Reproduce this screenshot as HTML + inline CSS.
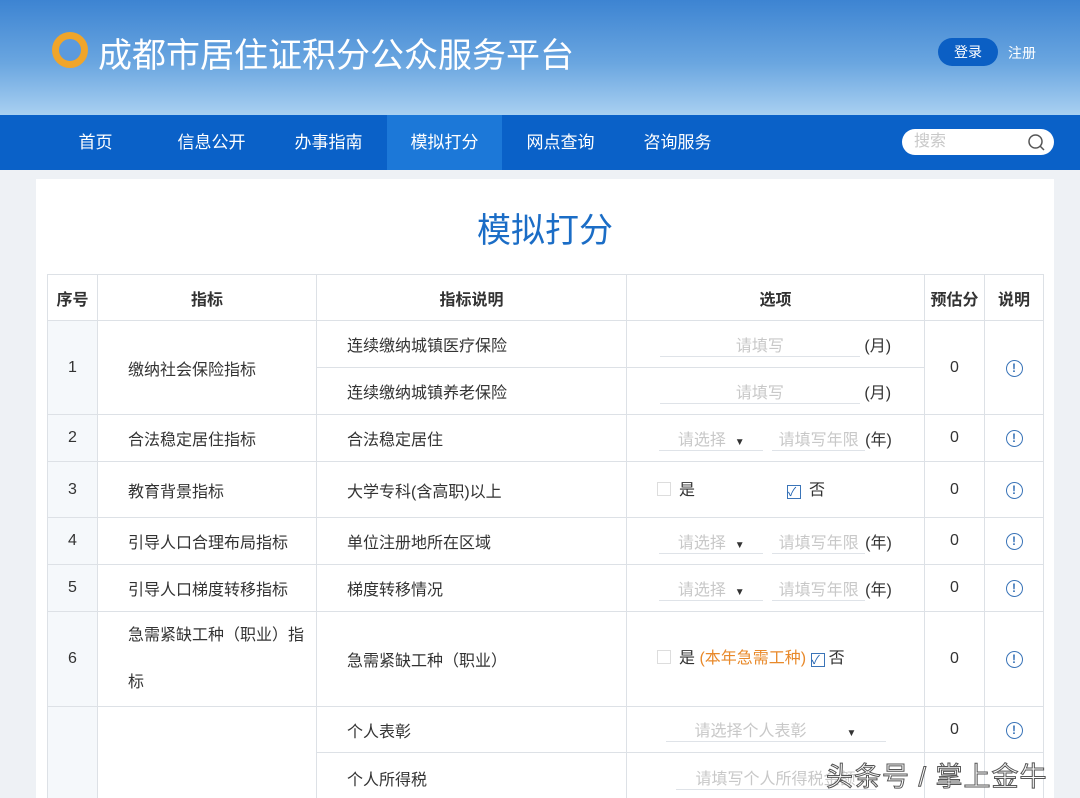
<!DOCTYPE html>
<html><head><meta charset="utf-8"><style>
*{margin:0;padding:0;box-sizing:border-box}
body{width:1080px;height:798px;overflow:hidden;background:#eef1f5;font-family:"Liberation Sans","Noto Sans CJK SC",sans-serif;position:relative}
.hd{position:absolute;left:0;top:0;width:1080px;height:115px;background:linear-gradient(180deg,#3d84d2 0%,#6aa6e0 55%,#a9d0f1 100%)}
.logo{position:absolute;left:52px;top:32px;width:36px;height:36px;border-radius:50%;border:7px solid #f0a52a;background:#5b9ade}
.title{position:absolute;left:98px;top:28px;font-size:34px;color:#fff;letter-spacing:0px}
.login{position:absolute;left:938px;top:38px;width:60px;height:28px;border-radius:14px;background:#0b5fc4;color:#fff;font-size:14px;text-align:center;line-height:28px}
.reg{position:absolute;left:1008px;top:43px;color:#fff;font-size:14px}
.nav{position:absolute;left:0;top:115px;width:1080px;height:55px;background:#0a61c8}
.nav span{position:absolute;top:0;height:55px;line-height:55px;color:#fff;font-size:17px;text-align:center;width:115px}
.nav .act{background:#1c78d8}
.search{position:absolute;left:902px;top:14px;width:152px;height:26px;border-radius:13px;background:#fff;color:#c8c8c8;font-size:16px;line-height:26px;padding-left:12px}
.box{position:absolute;left:36px;top:179px;width:1018px;height:619px;background:#fff;overflow:hidden}
h1{position:absolute;left:0;width:1018px;top:24px;text-align:center;font-size:34px;font-weight:normal;color:#1b6dc6}
table{position:absolute;left:11px;top:95px;border-collapse:collapse;font-size:16px;color:#333}
td{border:1px solid #dde1e6;text-align:center;padding:0}
th{border:1px solid #dde1e6;font-size:16px;font-weight:bold;color:#333;height:46px}
td.l{text-align:left;padding-left:30px}
td.n{background:#f5f8fb}
.inp{display:inline-block;border-bottom:1px solid #dfe3e8;color:#c8c8c8;text-align:center}
.ic{display:inline-block;width:17px;height:17px;border:1.5px solid #3a74b8;border-radius:50%;color:#3a74b8;font-size:12px;line-height:14px;font-weight:bold}
.cb{display:inline-block;width:14px;height:14px;border:1px solid #ddd;vertical-align:-1px;margin-right:8px;font-size:12px;line-height:12px;color:#1b5fb0}
.cb.on{border-color:#3a74b8}
.wm{position:absolute;left:826px;top:755px;font-size:27px;color:#fff;-webkit-text-stroke:1px #555;letter-spacing:1px}
</style></head><body>
<div class="hd"><div class="logo"></div><div class="title">成都市居住证积分公众服务平台</div><div class="login">登录</div><div class="reg">注册</div></div>
<div class="nav"><span style="left:38px">首页</span><span style="left:154px">信息公开</span><span style="left:271px">办事指南</span><span class="act" style="left:387px">模拟打分</span><span style="left:503px">网点查询</span><span style="left:620px">咨询服务</span>
<div class="search">搜索<svg style="position:absolute;right:8px;top:4px" width="19" height="19" viewBox="0 0 19 19"><circle cx="8.5" cy="8.5" r="6.5" fill="none" stroke="#555" stroke-width="1.5"/><path d="M13 13l4 4" stroke="#555" stroke-width="1.5"/></svg></div></div>
<div class="box"><h1>模拟打分</h1>
<table>
<tr><th style="width:50px">序号</th><th style="width:219px">指标</th><th style="width:310px">指标说明</th><th style="width:298px">选项</th><th style="width:60px">预估分</th><th style="width:59px">说明</th></tr>
<tr style="height:47px"><td class="n" rowspan="2">1</td><td class="l" rowspan="2">缴纳社会保险指标</td><td class="l">连续缴纳城镇医疗保险</td><td><span class="inp" style="width:200px">请填写</span> (月)</td><td rowspan="2">0</td><td rowspan="2"><span class="ic">!</span></td></tr>
<tr style="height:47px"><td class="l">连续缴纳城镇养老保险</td><td><span class="inp" style="width:200px">请填写</span> (月)</td></tr>
<tr style="height:47px"><td class="n">2</td><td class="l">合法稳定居住指标</td><td class="l">合法稳定居住</td><td><span class="inp" style="width:104px">请选择 &nbsp;<span style="color:#333;font-size:10px">▼</span></span> &nbsp;<span class="inp" style="width:93px">请填写年限</span>(年)</td><td>0</td><td><span class="ic">!</span></td></tr>
<tr style="height:56px"><td class="n">3</td><td class="l">教育背景指标</td><td class="l">大学专科(含高职)以上</td><td style="text-align:left;padding-left:30px;vertical-align:top;padding-top:14px"><span class="cb"></span>是<span style="display:inline-block;width:92px"></span><span class="cb on">✓</span>否</td><td>0</td><td><span class="ic">!</span></td></tr>
<tr style="height:47px"><td class="n">4</td><td class="l">引导人口合理布局指标</td><td class="l">单位注册地所在区域</td><td><span class="inp" style="width:104px">请选择 &nbsp;<span style="color:#333;font-size:10px">▼</span></span> &nbsp;<span class="inp" style="width:93px">请填写年限</span>(年)</td><td>0</td><td><span class="ic">!</span></td></tr>
<tr style="height:47px"><td class="n">5</td><td class="l">引导人口梯度转移指标</td><td class="l">梯度转移情况</td><td><span class="inp" style="width:104px">请选择 &nbsp;<span style="color:#333;font-size:10px">▼</span></span> &nbsp;<span class="inp" style="width:93px">请填写年限</span>(年)</td><td>0</td><td><span class="ic">!</span></td></tr>
<tr style="height:94px"><td class="n">6</td><td class="l" style="line-height:47px;padding-right:10px">急需紧缺工种（职业）指标</td><td class="l">急需紧缺工种（职业）</td><td style="text-align:left;padding-left:30px;vertical-align:top;padding-top:32px"><span class="cb"></span>是 <span style="color:#e8892a">(本年急需工种)</span> <span class="cb on" style="margin-right:4px">✓</span>否</td><td>0</td><td><span class="ic">!</span></td></tr>
<tr style="height:46px"><td class="n" rowspan="2"></td><td rowspan="2"></td><td class="l">个人表彰</td><td><span class="inp" style="width:220px">请选择个人表彰 &nbsp; &nbsp; &nbsp; &nbsp; <span style="color:#333;font-size:10px">▼</span></span></td><td>0</td><td><span class="ic">!</span></td></tr>
<tr style="height:50px"><td class="l">个人所得税</td><td><span class="inp" style="width:200px">请填写个人所得税金额</span></td><td></td><td></td></tr>
</table></div>
<div class="wm">头条号 / 掌上金牛</div>
</body></html>
